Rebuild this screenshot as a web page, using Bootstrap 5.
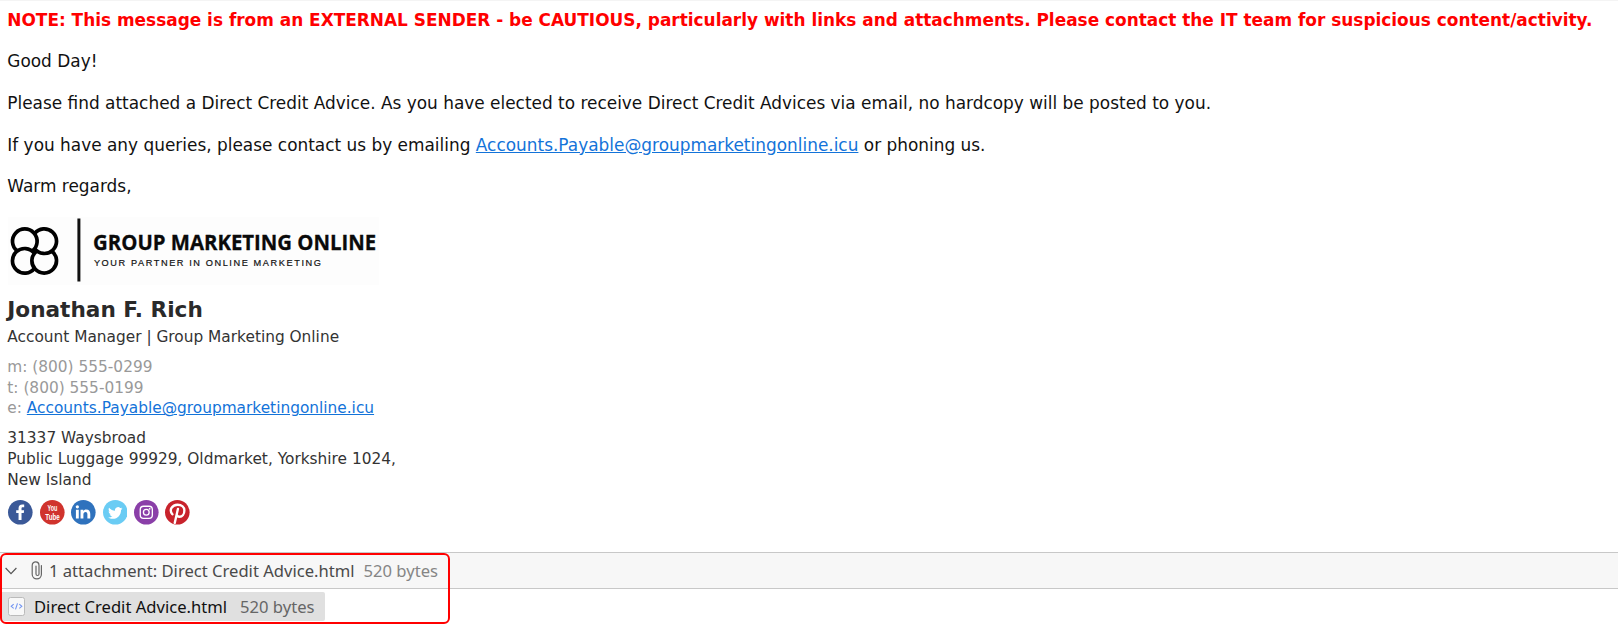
<!DOCTYPE html>
<html lang="en">
<head>
<meta charset="utf-8">
<meta name="viewport" content="width=device-width, initial-scale=1">
<title>Direct Credit Advice</title>
<link href="https://cdn.jsdelivr.net/npm/bootstrap@5.3.0/dist/css/bootstrap.min.css" rel="stylesheet">
<style>
body{font-family:"DejaVu Sans",sans-serif;font-size:16.93px;line-height:20.8px;color:#111;background:#fff;height:628px;overflow:hidden}
.message{height:552px;padding:8.8px 0 0 7.3px;border-top:1px solid #f4f4f4}
.message p{margin:0 0 20.8px;white-space:nowrap}
.message a{color:#1373d9;text-decoration:underline}
.notice{color:#f00;font-weight:700}
.brand-logo{display:block;background:#fdfdfd;margin-left:.9px;overflow:visible}
.signature{font-size:15.36px;color:#333;white-space:nowrap;margin-top:-.6px}
.sender{font-size:21.6px;line-height:28px;font-weight:700;color:#2a2a2a;margin:11px 0 2.6px}
.contact{color:#999;margin:9.2px 0 9.1px}
.social{gap:6.8px;margin:9.5px 0 0 1.2px}
.social svg{width:24.6px;height:24.6px}
.files{font-family:"Noto Sans",sans-serif;font-size:16.6px}
.files-bar{height:37px;background:#f7f7f7;border-top:1px solid #c8c8c8;border-bottom:1px solid #c8c8c8;color:#4a4a4a}
.files span{padding-top:2px}
.files-bar .chevron{margin:0 14px 0 5px}
.files-bar .clip{margin-right:5px}
.file-size{color:#858585;margin-left:9px}
.file-row{width:324.5px;height:29px;margin-top:3px;background:#e0e0e0;border-radius:0 2px 2px 0;color:#111;padding-left:8px}
.file-row .file-icon{margin-right:9px}
.file-row .file-size{color:#666;margin-left:13px}
.marker{top:1px;left:0;width:450px;height:71px;border:2px solid #f00;border-radius:6px}
</style>
</head>
<body>
<main class="message">
<p class="notice">NOTE: This message is from an EXTERNAL SENDER - be CAUTIOUS, particularly with links and attachments. Please contact the IT team for suspicious content/activity.</p>
<p>Good Day!</p>
<p>Please find attached a Direct Credit Advice. As you have elected to receive Direct Credit Advices via email, no hardcopy will be posted to you.</p>
<p>If you have any queries, please contact us by emailing <a href="#">Accounts.Payable@groupmarketingonline.icu</a> or phoning us.</p>
<p>Warm regards,</p>
<section class="signature">
<svg class="brand-logo" width="371" height="68" viewBox="7.5 217 371 68" role="img" aria-label="Group Marketing Online">
<g fill="none" stroke="#000" stroke-width="3.7">
<path d="M16.8 251A12.3 12.3 0 1 1 31.8 251"/>
<path d="M34 233.7A12.3 12.3 0 1 1 34 248.7"/>
<path d="M51.2 251A12.3 12.3 0 1 1 36.2 251"/>
<path d="M34 268.3A12.3 12.3 0 1 1 34 253.3"/>
</g>
<path d="M78.4 218.5V281.5" stroke="#111" stroke-width="3"/>
<text x="92.6" y="250.2" font-family="Open Sans, sans-serif" font-weight="700" font-size="20.8" fill="#0a0a0a" stroke="#0a0a0a" stroke-width=".3" textLength="283" lengthAdjust="spacingAndGlyphs">GROUP MARKETING ONLINE</text>
<text x="93.4" y="266.3" font-family="Liberation Sans, sans-serif" font-size="9.2" fill="#111" stroke="#111" stroke-width=".2" textLength="227" lengthAdjust="spacing">YOUR PARTNER IN ONLINE MARKETING</text>
</svg>
<div class="sender">Jonathan F. Rich</div>
<div>Account Manager | Group Marketing Online</div>
<div class="contact">
<div>m: (800) 555-0299</div>
<div>t: (800) 555-0199</div>
<div>e: <a href="#">Accounts.Payable@groupmarketingonline.icu</a></div>
</div>
<div>31337 Waysbroad</div>
<div>Public Luggage 99929, Oldmarket, Yorkshire 1024,</div>
<div>New Island</div>
<div class="social d-flex">
<svg viewBox="0 0 24 24"><circle cx="12" cy="12" r="12" fill="#3b5998"/><path fill="#fff" d="M10.3 19.6v-6.8H8V9.9h2.3V8.1c0-2.6 1.3-3.8 3.6-3.8.9 0 1.6.1 1.9.1V7h-1.3c-1 0-1.3.5-1.3 1.2v1.7h2.5l-.3 2.9h-2.2v6.8z"/></svg>
<svg viewBox="0 0 24 24" overflow="visible"><circle cx="12" cy="12" r="12" fill="#d0332d"/><g fill="#fff" font-family="Liberation Sans, sans-serif" font-weight="700"><text x="7.3" y="10.6" font-size="8" textLength="9.6" lengthAdjust="spacingAndGlyphs">You</text><text x="5.2" y="19.4" font-size="8.2" textLength="14" lengthAdjust="spacingAndGlyphs">Tube</text></g></svg>
<svg viewBox="0 0 24 24"><circle cx="12" cy="12" r="12" fill="#2f72bd"/><path fill="#fff" d="M4.8 9.6h2.8v8.4H4.8zM9.3 9.6h2.7v1.2c.5-.9 1.5-1.5 2.8-1.5 2.9 0 4 1.7 4 4.4V18H16v-4c0-1.4-.5-2.3-1.7-2.3-1.4 0-2.2.9-2.2 2.4V18H9.3z"/><circle cx="6.2" cy="6.7" r="1.6" fill="#fff"/></svg>
<svg viewBox="0 0 24 24"><circle cx="12" cy="12" r="12" fill="#6accf4"/><path fill="#fff" d="M19 8.3c-.5.2-1.1.4-1.6.5.6-.4 1-.9 1.2-1.6-.5.3-1.1.5-1.8.7a2.9 2.9 0 0 0-5 2.6c-2.4-.1-4.5-1.2-5.9-3-.8 1.4-.3 3 .9 3.9-.5 0-.9-.2-1.3-.4 0 1.4 1 2.6 2.3 2.9-.4.1-.9.1-1.3 0 .4 1.2 1.4 2 2.7 2a6 6 0 0 1-4.2 1.2c1.3.8 2.8 1.3 4.4 1.3 5.4 0 8.3-4.5 8.2-8.7.6-.4 1-.9 1.4-1.4z"/></svg>
<svg viewBox="0 0 24 24"><circle cx="12" cy="12" r="12" fill="#8a3fa8"/><g fill="none" stroke="#fff" stroke-width="1.3"><rect x="6.1" y="6.1" width="11.8" height="11.8" rx="3.2"/><circle cx="12" cy="12" r="2.8"/></g><circle cx="15.3" cy="8.6" r=".9" fill="#fff"/></svg>
<svg viewBox="0 0 24 24"><circle cx="12" cy="12" r="12" fill="#c8232c"/><path fill="none" stroke="#fff" stroke-width="2.3" stroke-linecap="round" d="M7.2 14C3.6 9.8 6.9 4.6 12.3 4.6c4 0 6.6 2.5 6.6 5.7 0 3.5-2.1 6-4.7 6-1.5 0-2.6-.8-2.7-2M12.6 8.7L9.5 22.4"/></svg>
</div>
</section>
</main>
<footer class="files position-relative">
<div class="files-bar d-flex align-items-center">
<svg class="chevron" width="12" height="8" viewBox="0 0 12 8"><path d="M.6 1L6 6.6 11.4 1" fill="none" stroke="#555" stroke-width="1.2"/></svg>
<svg class="clip" width="13" height="19" viewBox="0 0 13 19"><path d="M5 5v8c0 2 3 2 3 0V4.4c0-4.6-6.8-4.6-6.8 0V13.200c0 6.200 9.200 6.200 9.200 0V4.500" fill="none" stroke="#666" stroke-width="1.2" stroke-linecap="round"/></svg>
<span>1 attachment: Direct Credit Advice.html</span><span class="file-size">520 bytes</span>
</div>
<div class="file-row d-flex align-items-center">
<svg class="file-icon" width="17" height="19" viewBox="0 0 17 19"><rect x=".5" y=".5" width="16" height="18" rx="2" fill="#f8f8f8" stroke="#bbb"/><path d="M5.700 7.200L3.200 9.300l2.500 2.100M11.300 7.200l2.500 2.100-2.500 2.100M9.500 6.300l-2 6" fill="none" stroke="#7295f2" stroke-width="1.1"/></svg>
<span>Direct Credit Advice.html</span><span class="file-size">520 bytes</span>
</div>
<div class="marker position-absolute"></div>
</footer>
<script src="https://cdn.jsdelivr.net/npm/bootstrap@5.3.0/dist/js/bootstrap.bundle.min.js"></script>
</body>
</html>
